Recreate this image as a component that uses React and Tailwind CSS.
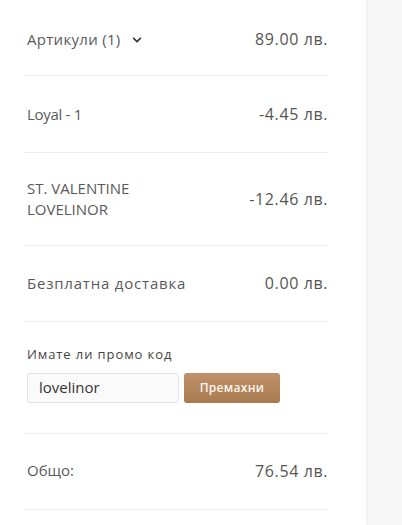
import { FaChevronDown } from "react-icons/fa";

const Row = ({ left, right, className = "" }) => (
  <div className={`flex items-center justify-between border-b border-[#ececec] ${className}`}>
    {left}
    <span className="text-[16px] text-[#555] tracking-[0.6px]">{right}</span>
  </div>
);

const App = () => {
  return (
    <div className="flex w-[402px] h-[525px] bg-white font-['Open_Sans',sans-serif]">
      <div className="w-[367px] pl-[25px] pr-[39px] flex flex-col">
        <Row
          className="h-[76px] pt-[3px] pl-[2px]"
          left={
            <span className="flex items-center gap-[11px] text-[15px] text-[#5a5a5a] tracking-[0.3px]">
              Артикули (1)
              <FaChevronDown className="text-[#333] mt-[2px]" size={10} />
            </span>
          }
          right="89.00 лв."
        />
        <Row
          className="h-[77px] pl-[2px]"
          left={<span className="text-[15px] text-[#5a5a5a] tracking-[-0.3px]">Loyal - 1</span>}
          right="-4.45 лв."
        />
        <Row
          className="h-[93px] pl-[2px]"
          left={
            <span className="text-[15px] leading-[21px] text-[#5a5a5a]">
              ST. VALENTINE
              <br />
              LOVELINOR
            </span>
          }
          right="-12.46 лв."
        />
        <Row
          className="h-[76px] pl-[2px] pb-[1px]"
          left={<span className="text-[15px] text-[#5a5a5a] tracking-[0.8px]">Безплатна доставка</span>}
          right="0.00 лв."
        />
        <div className="h-[112px] border-b border-[#ececec] pl-[2px] pt-[23px]">
          <div className="text-[13px] text-[#444] tracking-[0.9px]">Имате ли промо код</div>
          <div className="flex gap-[5px] mt-[8px]">
            <div className="w-[152px] h-[30px] border border-[#e3e3e3] rounded-[3px] bg-[#fafafa] flex items-center pl-[11px] text-[15px] text-[#333]">
              lovelinor
            </div>
            <button className="w-[96px] h-[30px] rounded-[3px] bg-gradient-to-b from-[#c0916a] to-[#a97b50] text-[#fdf6ee] text-[12px] font-semibold tracking-[0.3px]">
              Премахни
            </button>
          </div>
        </div>
        <Row
          className="h-[76px] pl-[2px] pb-[2px]"
          left={<span className="text-[15px] text-[#5a5a5a]">Общо:</span>}
          right="76.54 лв."
        />
      </div>
      <div className="flex-1 bg-[#f6f6f6] border-l border-[#efefef] shadow-[-2px_0_3px_rgba(0,0,0,0.03)]" />
    </div>
  );
};

export default App;
